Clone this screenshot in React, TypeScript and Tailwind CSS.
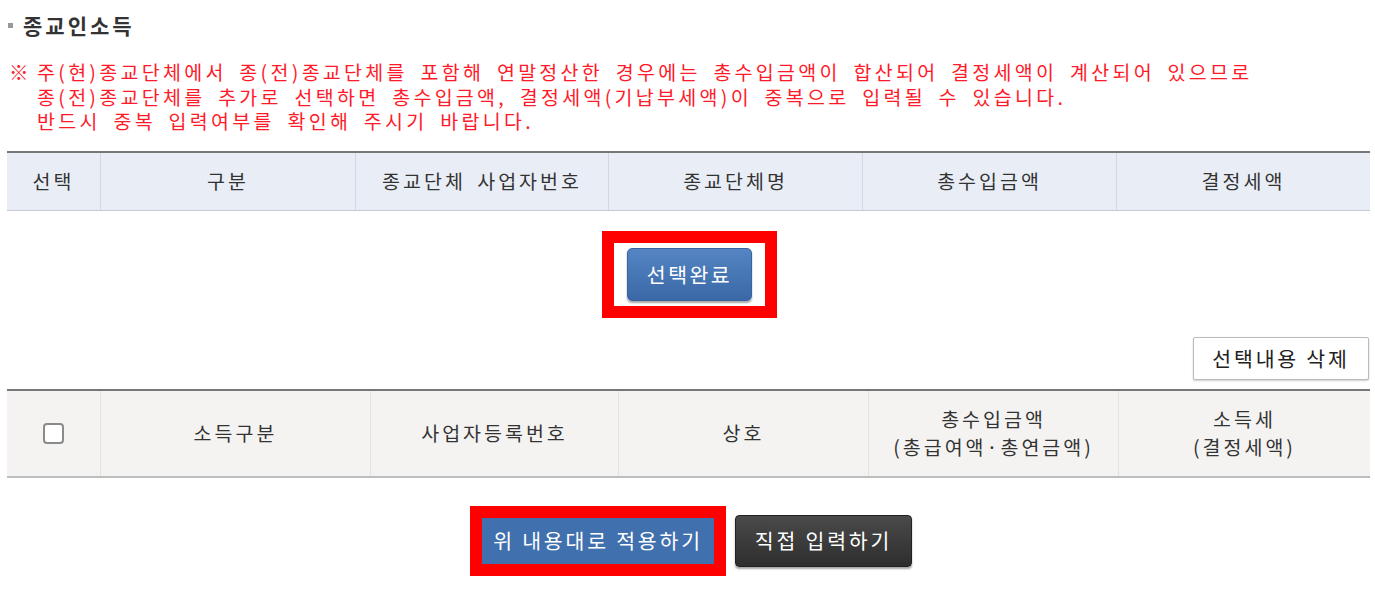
import React from 'react';

const font = { fontFamily: '"Noto Sans CJK KR", "Noto Sans", sans-serif' };

const topCols = ['선택', '구분', '종교단체 사업자번호', '종교단체명', '총수입금액', '결정세액'];

export default function App() {
  return (
    <div className="w-[1375px] h-[599px] bg-white text-[#333] overflow-hidden" style={font}>
      {/* 제목 */}
      <div className="flex items-center pl-[8px] pt-[12px] h-[39px]">
        <span className="w-[5px] h-[5px] bg-[#999] mr-[10px]"></span>
        <h2 className="text-[21px] font-bold tracking-[3px] leading-none">종교인소득</h2>
      </div>

      {/* 안내문 */}
      <div className="flex pl-[9px] pt-[21px] text-[19.5px] leading-[24.5px] text-[#ff1a2a] tracking-[3.3px] [word-spacing:5px]">
        <span className="font-bold w-[28px] shrink-0 tracking-normal">※</span>
        <p>
          주(현)종교단체에서 종(전)종교단체를 포함해 연말정산한 경우에는 총수입금액이 합산되어 결정세액이 계산되어 있으므로
          <br />
          종(전)종교단체를 추가로 선택하면 총수입금액, 결정세액(기납부세액)이 중복으로 입력될 수 있습니다.
          <br />
          반드시 중복 입력여부를 확인해 주시기 바랍니다.
        </p>
      </div>

      {/* 종교단체 목록 */}
      <div className="ml-[7px] mr-[5px] mt-[17px] border-t-2 border-[#777] border-b border-b-[#c8ccd2]">
        <div className="grid grid-cols-[93px_255px_253px_254px_254px_1fr] h-[57px] bg-[#e9eef6] text-[19.5px] tracking-[3px] [word-spacing:4px]">
          {topCols.map((c, i) => (
            <div
              key={c}
              className={`flex items-center justify-center ${i > 0 ? 'border-l border-[#d3d9e2]' : ''}`}
            >
              {c}
            </div>
          ))}
        </div>
      </div>

      <div className="flex justify-center mt-[20px]">
        <div className="ml-[4px] border-[12px] border-[#ff0000] w-[175px] h-[87px] flex items-center justify-center">
          <button className="w-[125px] h-[53px] rounded-[5px] bg-gradient-to-b from-[#5585c4] to-[#3a68a6] text-white text-[20.5px] tracking-[2.5px] shadow-[0_2px_2px_rgba(0,0,0,0.35)] border border-[#3a64a0]">
            선택완료
          </button>
        </div>
      </div>

      {/* 선택내용 삭제 */}
      <div className="flex justify-end pr-[6px] mt-[19px]">
        <button className="w-[176px] h-[43px] bg-white border border-[#bbb] rounded-[2px] text-[20.5px] tracking-[2.8px] text-[#222] shadow-[0_1px_2px_rgba(0,0,0,0.2)]">
          선택내용 삭제
        </button>
      </div>

      {/* 소득 목록 */}
      <div className="ml-[7px] mr-[5px] mt-[9px] border-t-2 border-[#777] border-b-2 border-b-[#bdbdbd]">
        <div className="grid grid-cols-[93px_270px_248px_250px_250px_1fr] h-[85px] bg-[#f4f3f2] text-[19.5px] leading-[28px] tracking-[3px]">
          <div className="flex items-center justify-center">
            <span className="w-[21px] h-[21px] rounded-[4px] border-2 border-[#8a8a8a] bg-white"></span>
          </div>
          <div className="flex items-center justify-center border-l border-[#e4e2df]">소득구분</div>
          <div className="flex items-center justify-center border-l border-[#e4e2df]">사업자등록번호</div>
          <div className="flex items-center justify-center border-l border-[#e4e2df]">상호</div>
          <div className="flex flex-col items-center justify-center border-l border-[#e4e2df]">
            <span>총수입금액</span>
            <span>(총급여액·총연금액)</span>
          </div>
          <div className="flex flex-col items-center justify-center border-l border-[#e4e2df]">
            <span>소득세</span>
            <span>(결정세액)</span>
          </div>
        </div>
      </div>

      {/* 하단 버튼 */}
      <div className="flex justify-center items-center gap-[9px] mt-[28px] pl-[7px]">
        <div className="border-[12px] border-[#ff0000] w-[256px] h-[70px] flex items-center justify-center">
          <button className="w-full h-full bg-[#4070ae] text-white text-[20.5px] tracking-[2.8px]">위 내용대로 적용하기</button>
        </div>
        <button className="w-[177px] h-[52px] rounded-[4px] bg-gradient-to-b from-[#4a4a4a] to-[#2e2e2e] text-white text-[20.5px] tracking-[2.8px] border border-[#222] shadow-[0_2px_2px_rgba(0,0,0,0.35)]">
          직접 입력하기
        </button>
      </div>
    </div>
  );
}
